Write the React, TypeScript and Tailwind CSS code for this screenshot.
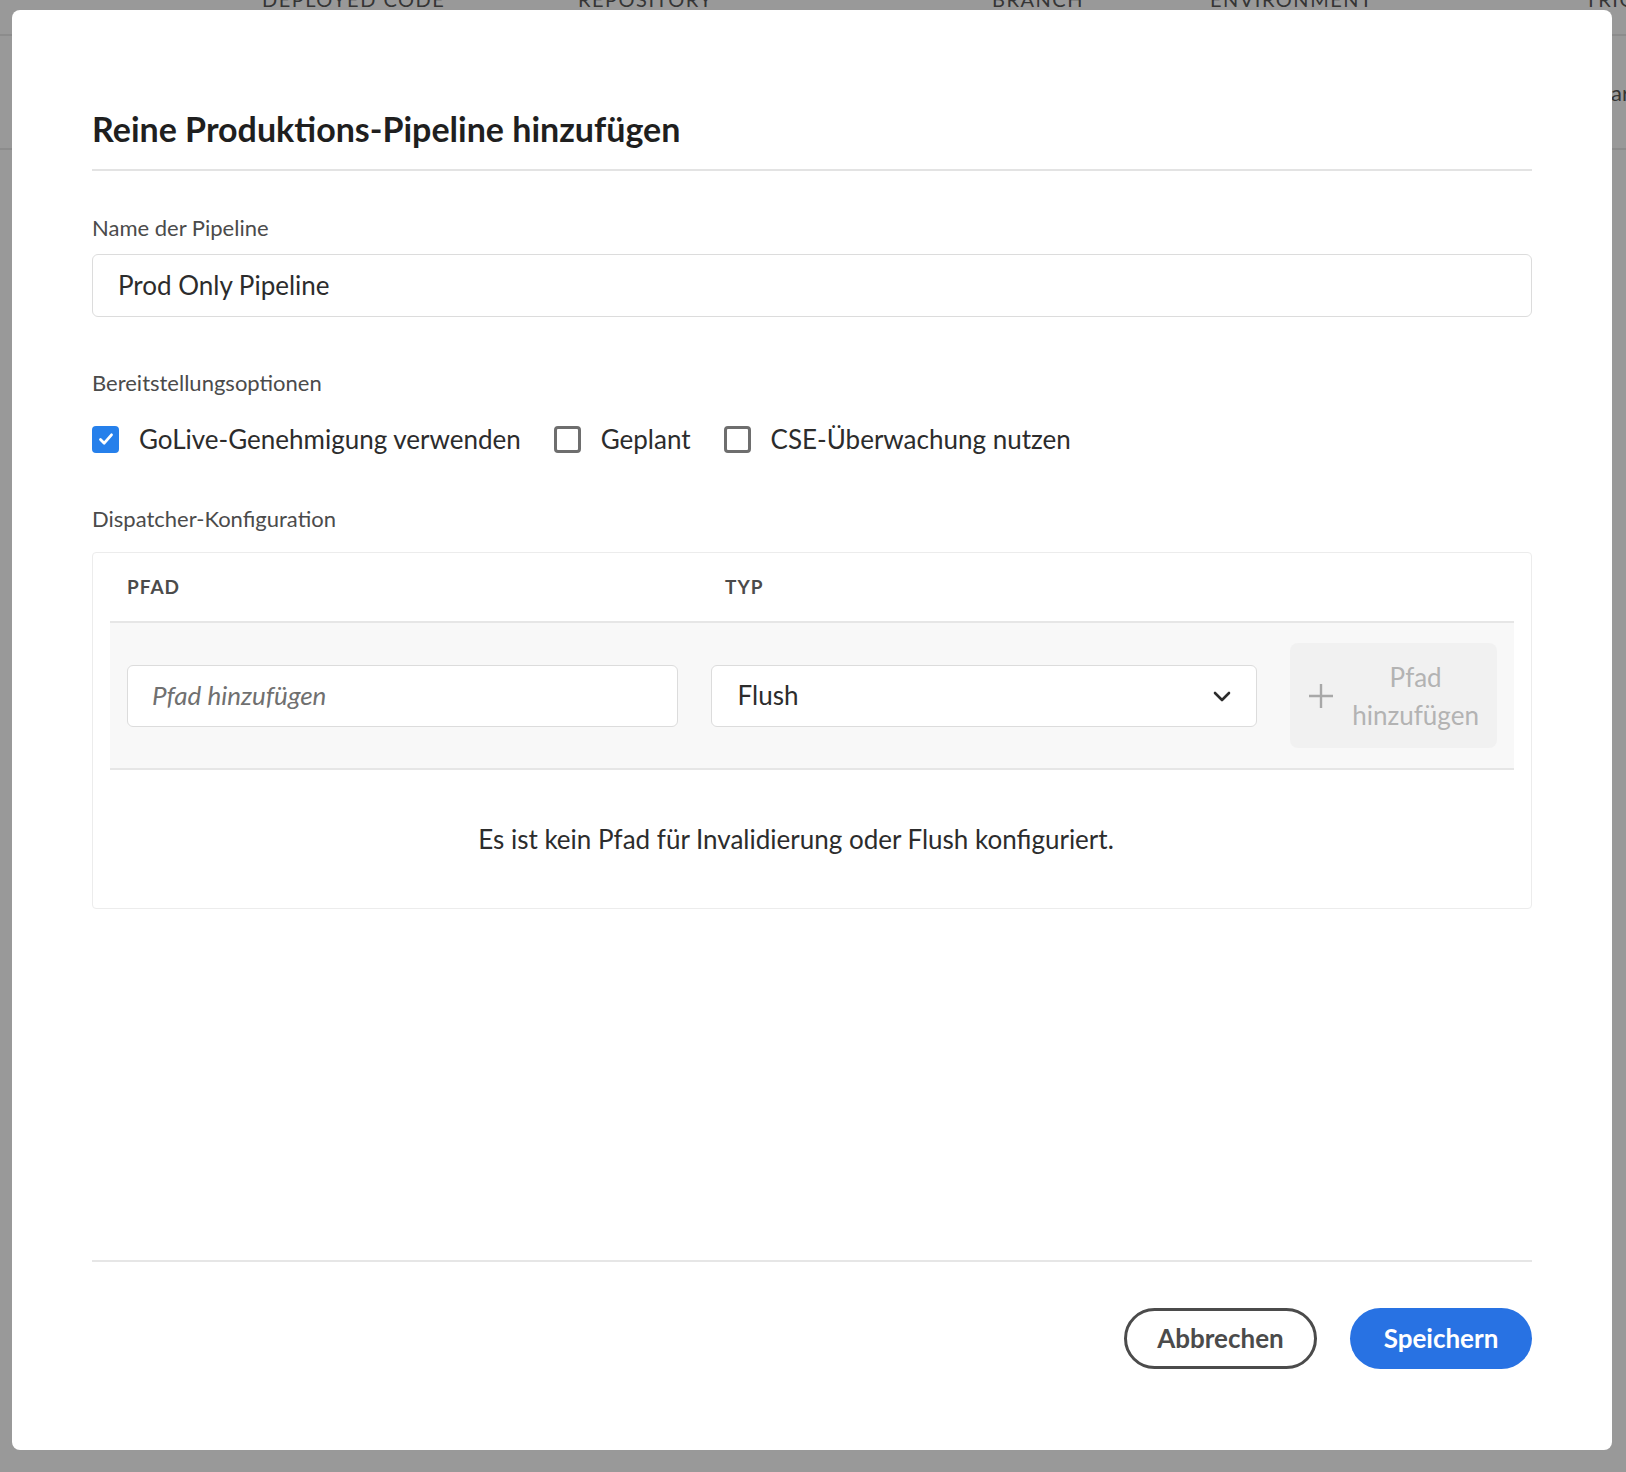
import React from "react";

function CheckBox({ checked }: { checked: boolean }) {
  if (checked) {
    return (
      <span className="flex h-[27px] w-[27px] shrink-0 items-center justify-center rounded-[4px] bg-[#2680eb]">
        <svg width="18" height="18" viewBox="0 0 18 18" fill="none">
          <path d="M3.5 9.5 L7.2 13.2 L14.5 4.8" stroke="white" strokeWidth="2.8" strokeLinecap="round" strokeLinejoin="round" />
        </svg>
      </span>
    );
  }
  return <span className="block h-[27px] w-[27px] shrink-0 rounded-[4px] border-[3px] border-[#6e6e6e] bg-white" />;
}

export default function App() {
  return (
    <div className="relative h-[1472px] w-full overflow-hidden bg-[#999999] [font-family:Lato,'Open_Sans',sans-serif]">
      {/* page behind the overlay */}
      <div className="h-[36px] overflow-hidden border-b-2 border-[#8c8c8c]">
        <div className="-mt-[11px] flex pl-[262px] text-[20px] uppercase leading-[20px] tracking-[1.5px] text-[#353535]">
          <span className="w-[316px] shrink-0 whitespace-nowrap">Deployed Code</span>
          <span className="w-[414px] shrink-0 whitespace-nowrap">Repository</span>
          <span className="w-[218px] shrink-0 whitespace-nowrap">Branch</span>
          <span className="w-[375px] shrink-0 whitespace-nowrap">Environment</span>
          <span className="shrink-0 whitespace-nowrap">Trigger</span>
        </div>
      </div>
      <div className="flex h-[114px] items-center border-b-2 border-[#8c8c8c] pl-[1611px]">
        <span className="whitespace-nowrap text-[22px] text-[#353535]">ar</span>
      </div>

      {/* modal */}
      <div className="absolute left-[12px] top-[10px] flex h-[1440px] w-[1600px] flex-col rounded-[8px] bg-white px-[80px]">
        <h1 className="pt-[99px] text-[34px] font-bold leading-[40px] text-[#1f1f1f]">
          Reine Produktions-Pipeline hinzufügen
        </h1>
        <div className="mt-[20px] h-[2px] bg-[#e3e3e3]" />

        <div className="mt-[43px] text-[22px] leading-[28px] text-[#4b4b4b]">Name der Pipeline</div>
        <div className="mt-[12px] flex h-[63px] items-center rounded-[6px] border border-[#dcdcdc] px-[25px] text-[26px] text-[#2c2c2c]">
          Prod Only Pipeline
        </div>

        <div className="mt-[52px] text-[22px] leading-[28px] text-[#4b4b4b]">Bereitstellungsoptionen</div>
        <div className="mt-[24px] flex h-[36px] items-center text-[26px] leading-[36px] text-[#2c2c2c]">
          <CheckBox checked />
          <span className="ml-[20px]">GoLive-Genehmigung verwenden</span>
          <span className="ml-[33px] flex">
            <CheckBox checked={false} />
          </span>
          <span className="ml-[20px]">Geplant</span>
          <span className="ml-[33px] flex">
            <CheckBox checked={false} />
          </span>
          <span className="ml-[20px]">CSE-Überwachung nutzen</span>
        </div>

        <div className="mt-[48px] text-[22px] leading-[28px] text-[#4b4b4b]">Dispatcher-Konfiguration</div>

        <div className="mt-[19px] flex h-[357px] flex-col rounded-[4px] border border-[#ececec] px-[17px]">
          <div className="flex h-[70px] shrink-0 items-center border-b-2 border-[#e6e6e6] text-[19px] font-bold uppercase tracking-[1px] text-[#4b4b4b]">
            <span className="w-[615px] pl-[17px]">Pfad</span>
            <span>Typ</span>
          </div>
          <div className="flex h-[147px] shrink-0 items-center gap-[33px] border-b-2 border-[#e6e6e6] bg-[#f8f8f8] px-[17px]">
            <div className="flex h-[62px] w-[551px] items-center rounded-[6px] border border-[#dcdcdc] bg-white px-[24px] text-[26px] italic text-[#707070]">
              Pfad hinzufügen
            </div>
            <div className="flex h-[62px] w-[547px] items-center justify-between rounded-[6px] border border-[#dcdcdc] bg-white pl-[26px] pr-[24px] text-[26px] text-[#2c2c2c]">
              <span>Flush</span>
              <svg width="20" height="20" viewBox="0 0 20 20" fill="none">
                <path d="M3 7 L10 14 L17 7" stroke="#2c2c2c" strokeWidth="2.6" strokeLinecap="round" strokeLinejoin="round" />
              </svg>
            </div>
            <div className="flex h-[105px] w-[207px] items-center justify-center gap-[18px] rounded-[8px] bg-[#f1f1f1]">
              <svg width="26" height="26" viewBox="0 0 26 26" fill="none">
                <path d="M13 1 V25 M1 13 H25" stroke="#a8a8a8" strokeWidth="2.4" />
              </svg>
              <span className="text-center text-[26px] leading-[38px] text-[#b3b3b3]">
                Pfad
                <br />
                hinzufügen
              </span>
            </div>
          </div>
          <div className="flex flex-1 items-center justify-center pr-[32px] text-[26px] text-[#2c2c2c]">
            Es ist kein Pfad für Invalidierung oder Flush konfiguriert.
          </div>
        </div>

        <div className="flex-1" />
        <div className="h-[2px] bg-[#e6e6e6]" />
        <div className="mt-[46px] flex justify-end gap-[33px] pb-[81px]">
          <button className="flex h-[61px] w-[193px] items-center justify-center rounded-full border-[3px] border-[#4b4b4b] bg-white text-[26px] font-bold text-[#4b4b4b]">
            Abbrechen
          </button>
          <button className="flex h-[61px] w-[182px] items-center justify-center rounded-full bg-[#2872e3] text-[26px] font-bold text-white">
            Speichern
          </button>
        </div>
      </div>
    </div>
  );
}
